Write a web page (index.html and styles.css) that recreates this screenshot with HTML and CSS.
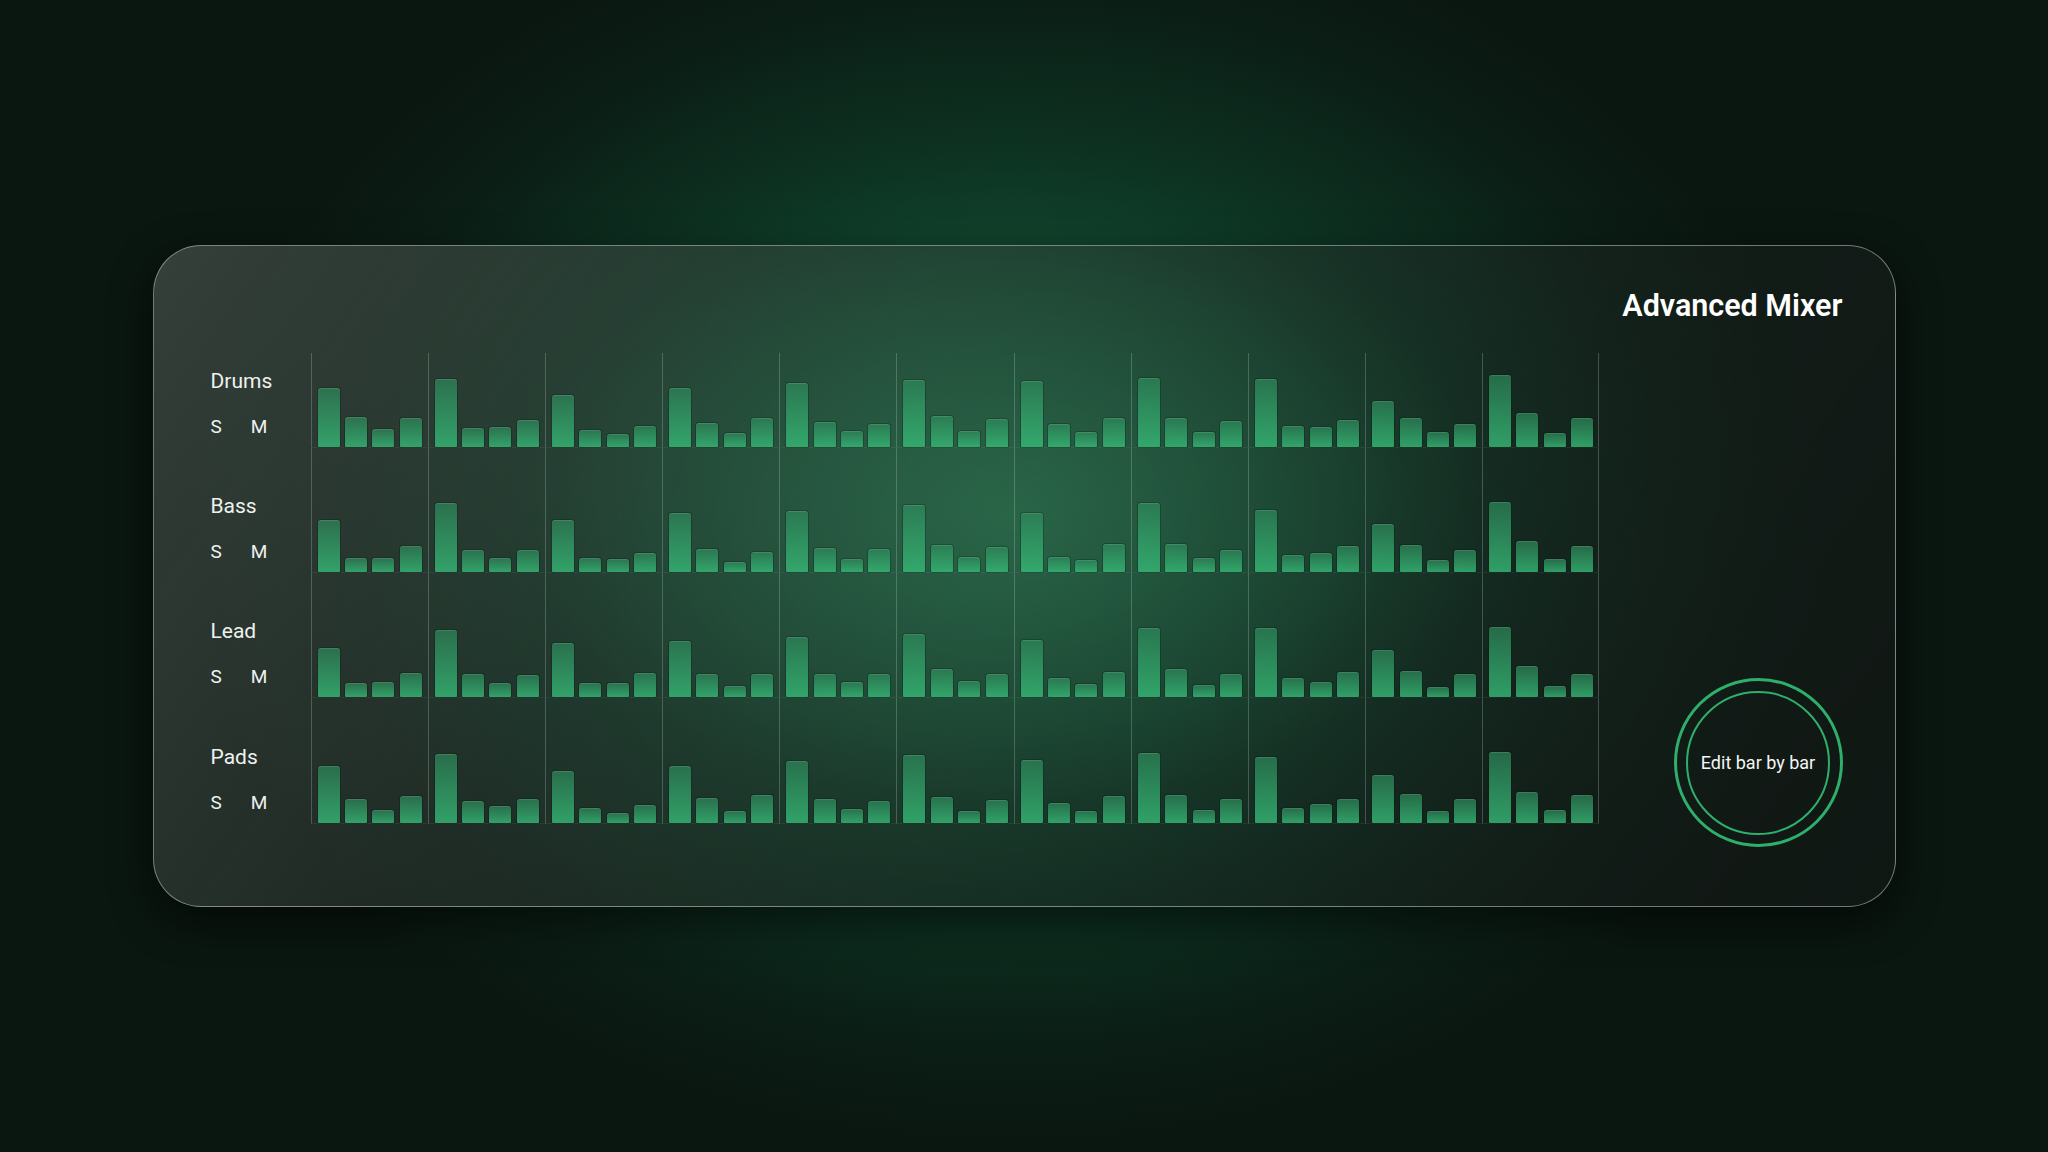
FILE: index.html
```html
<!DOCTYPE html>
<html lang="en">
<head>
<meta charset="utf-8">
<title>Advanced Mixer</title>
<link rel="stylesheet" href="styles.css">
</head>
<body>
<main class="panel">
  <header class="panel-head">
    <h1 class="title">Advanced Mixer</h1>
  </header>
  <section class="panel-body">
    <div class="mixer">
      <div class="track-label first"><span class="track-name">Drums</span><span class="sm"><span>S</span><span>M</span></span></div>
      <div class="cell first"><i class="bar" style="height:59px"></i><i class="bar" style="height:30px"></i><i class="bar" style="height:18px"></i><i class="bar" style="height:29px"></i></div>
      <div class="cell first"><i class="bar" style="height:68px"></i><i class="bar" style="height:19px"></i><i class="bar" style="height:20px"></i><i class="bar" style="height:27px"></i></div>
      <div class="cell first"><i class="bar" style="height:52px"></i><i class="bar" style="height:17px"></i><i class="bar" style="height:13px"></i><i class="bar" style="height:21px"></i></div>
      <div class="cell first"><i class="bar" style="height:59px"></i><i class="bar" style="height:24px"></i><i class="bar" style="height:14px"></i><i class="bar" style="height:29px"></i></div>
      <div class="cell first"><i class="bar" style="height:64px"></i><i class="bar" style="height:25px"></i><i class="bar" style="height:16px"></i><i class="bar" style="height:23px"></i></div>
      <div class="cell first"><i class="bar" style="height:67px"></i><i class="bar" style="height:31px"></i><i class="bar" style="height:16px"></i><i class="bar" style="height:28px"></i></div>
      <div class="cell first"><i class="bar" style="height:66px"></i><i class="bar" style="height:23px"></i><i class="bar" style="height:15px"></i><i class="bar" style="height:29px"></i></div>
      <div class="cell first"><i class="bar" style="height:69px"></i><i class="bar" style="height:29px"></i><i class="bar" style="height:15px"></i><i class="bar" style="height:26px"></i></div>
      <div class="cell first"><i class="bar" style="height:68px"></i><i class="bar" style="height:21px"></i><i class="bar" style="height:20px"></i><i class="bar" style="height:27px"></i></div>
      <div class="cell first"><i class="bar" style="height:46px"></i><i class="bar" style="height:29px"></i><i class="bar" style="height:15px"></i><i class="bar" style="height:23px"></i></div>
      <div class="cell first last"><i class="bar" style="height:72px"></i><i class="bar" style="height:34px"></i><i class="bar" style="height:14px"></i><i class="bar" style="height:29px"></i></div>

      <div class="track-label"><span class="track-name">Bass</span><span class="sm"><span>S</span><span>M</span></span></div>
      <div class="cell"><i class="bar" style="height:52px"></i><i class="bar" style="height:14px"></i><i class="bar" style="height:14px"></i><i class="bar" style="height:26px"></i></div>
      <div class="cell"><i class="bar" style="height:69px"></i><i class="bar" style="height:22px"></i><i class="bar" style="height:14px"></i><i class="bar" style="height:22px"></i></div>
      <div class="cell"><i class="bar" style="height:52px"></i><i class="bar" style="height:14px"></i><i class="bar" style="height:13px"></i><i class="bar" style="height:19px"></i></div>
      <div class="cell"><i class="bar" style="height:59px"></i><i class="bar" style="height:23px"></i><i class="bar" style="height:10px"></i><i class="bar" style="height:20px"></i></div>
      <div class="cell"><i class="bar" style="height:61px"></i><i class="bar" style="height:24px"></i><i class="bar" style="height:13px"></i><i class="bar" style="height:23px"></i></div>
      <div class="cell"><i class="bar" style="height:67px"></i><i class="bar" style="height:27px"></i><i class="bar" style="height:15px"></i><i class="bar" style="height:25px"></i></div>
      <div class="cell"><i class="bar" style="height:59px"></i><i class="bar" style="height:15px"></i><i class="bar" style="height:12px"></i><i class="bar" style="height:28px"></i></div>
      <div class="cell"><i class="bar" style="height:69px"></i><i class="bar" style="height:28px"></i><i class="bar" style="height:14px"></i><i class="bar" style="height:22px"></i></div>
      <div class="cell"><i class="bar" style="height:62px"></i><i class="bar" style="height:17px"></i><i class="bar" style="height:19px"></i><i class="bar" style="height:26px"></i></div>
      <div class="cell"><i class="bar" style="height:48px"></i><i class="bar" style="height:27px"></i><i class="bar" style="height:12px"></i><i class="bar" style="height:22px"></i></div>
      <div class="cell last"><i class="bar" style="height:70px"></i><i class="bar" style="height:31px"></i><i class="bar" style="height:13px"></i><i class="bar" style="height:26px"></i></div>

      <div class="track-label"><span class="track-name">Lead</span><span class="sm"><span>S</span><span>M</span></span></div>
      <div class="cell"><i class="bar" style="height:49px"></i><i class="bar" style="height:14px"></i><i class="bar" style="height:15px"></i><i class="bar" style="height:24px"></i></div>
      <div class="cell"><i class="bar" style="height:67px"></i><i class="bar" style="height:23px"></i><i class="bar" style="height:14px"></i><i class="bar" style="height:22px"></i></div>
      <div class="cell"><i class="bar" style="height:54px"></i><i class="bar" style="height:14px"></i><i class="bar" style="height:14px"></i><i class="bar" style="height:24px"></i></div>
      <div class="cell"><i class="bar" style="height:56px"></i><i class="bar" style="height:23px"></i><i class="bar" style="height:11px"></i><i class="bar" style="height:23px"></i></div>
      <div class="cell"><i class="bar" style="height:60px"></i><i class="bar" style="height:23px"></i><i class="bar" style="height:15px"></i><i class="bar" style="height:23px"></i></div>
      <div class="cell"><i class="bar" style="height:63px"></i><i class="bar" style="height:28px"></i><i class="bar" style="height:16px"></i><i class="bar" style="height:23px"></i></div>
      <div class="cell"><i class="bar" style="height:57px"></i><i class="bar" style="height:19px"></i><i class="bar" style="height:13px"></i><i class="bar" style="height:25px"></i></div>
      <div class="cell"><i class="bar" style="height:69px"></i><i class="bar" style="height:28px"></i><i class="bar" style="height:12px"></i><i class="bar" style="height:23px"></i></div>
      <div class="cell"><i class="bar" style="height:69px"></i><i class="bar" style="height:19px"></i><i class="bar" style="height:15px"></i><i class="bar" style="height:25px"></i></div>
      <div class="cell"><i class="bar" style="height:47px"></i><i class="bar" style="height:26px"></i><i class="bar" style="height:10px"></i><i class="bar" style="height:23px"></i></div>
      <div class="cell last"><i class="bar" style="height:70px"></i><i class="bar" style="height:31px"></i><i class="bar" style="height:11px"></i><i class="bar" style="height:23px"></i></div>

      <div class="track-label"><span class="track-name">Pads</span><span class="sm"><span>S</span><span>M</span></span></div>
      <div class="cell"><i class="bar" style="height:57px"></i><i class="bar" style="height:24px"></i><i class="bar" style="height:13px"></i><i class="bar" style="height:27px"></i></div>
      <div class="cell"><i class="bar" style="height:69px"></i><i class="bar" style="height:22px"></i><i class="bar" style="height:17px"></i><i class="bar" style="height:24px"></i></div>
      <div class="cell"><i class="bar" style="height:52px"></i><i class="bar" style="height:15px"></i><i class="bar" style="height:10px"></i><i class="bar" style="height:18px"></i></div>
      <div class="cell"><i class="bar" style="height:57px"></i><i class="bar" style="height:25px"></i><i class="bar" style="height:12px"></i><i class="bar" style="height:28px"></i></div>
      <div class="cell"><i class="bar" style="height:62px"></i><i class="bar" style="height:24px"></i><i class="bar" style="height:14px"></i><i class="bar" style="height:22px"></i></div>
      <div class="cell"><i class="bar" style="height:68px"></i><i class="bar" style="height:26px"></i><i class="bar" style="height:12px"></i><i class="bar" style="height:23px"></i></div>
      <div class="cell"><i class="bar" style="height:63px"></i><i class="bar" style="height:20px"></i><i class="bar" style="height:12px"></i><i class="bar" style="height:27px"></i></div>
      <div class="cell"><i class="bar" style="height:70px"></i><i class="bar" style="height:28px"></i><i class="bar" style="height:13px"></i><i class="bar" style="height:24px"></i></div>
      <div class="cell"><i class="bar" style="height:66px"></i><i class="bar" style="height:15px"></i><i class="bar" style="height:19px"></i><i class="bar" style="height:24px"></i></div>
      <div class="cell"><i class="bar" style="height:48px"></i><i class="bar" style="height:29px"></i><i class="bar" style="height:12px"></i><i class="bar" style="height:24px"></i></div>
      <div class="cell last"><i class="bar" style="height:71px"></i><i class="bar" style="height:31px"></i><i class="bar" style="height:13px"></i><i class="bar" style="height:28px"></i></div>
    </div>
    <aside class="side">
      <button class="edit-btn" type="button"><span class="edit-inner">Edit bar by bar</span></button>
    </aside>
  </section>
</main>
</body>
</html>
```

FILE: styles.css
```css
* { box-sizing: border-box; }

html, body {
  margin: 0;
  padding: 0;
}

body {
  min-height: 100vh;
  display: flex;
  align-items: center;
  justify-content: center;
  font-family: Roboto, "Liberation Sans", Arial, sans-serif;
  color: #eef2ef;
  background:
    radial-gradient(ellipse 820px 640px at 1010px 520px, #1a6d45 0%, #125034 30%, #0d3222 58%, #0b1e15 82%, #0a1610 100%),
    #0a1610;
}

.panel {
  width: 1743px;
  height: 662px;
  border: 1px solid rgba(190, 205, 196, 0.55);
  border-radius: 48px;
  padding: 42px 52px 59px 57px;
  display: flex;
  flex-direction: column;
  background:
    radial-gradient(ellipse 640px 400px at 850px 260px, rgba(60, 140, 100, 0.28), rgba(60, 140, 100, 0) 75%),
    linear-gradient(125deg, rgba(88, 98, 92, 0.55) 0%, rgba(60, 68, 63, 0.42) 32%, rgba(34, 42, 38, 0.4) 62%, rgba(18, 24, 21, 0.78) 100%);
  box-shadow: 0 14px 40px rgba(0, 0, 0, 0.55);
}

.panel-head {
  display: flex;
  justify-content: flex-end;
  margin-bottom: 29px;
}

.title {
  margin: 0;
  font-size: 30.5px;
  line-height: 36px;
  font-weight: 600;
  color: #ffffff;
}

.panel-body {
  flex: 1;
  display: flex;
  align-items: stretch;
}

.mixer {
  align-self: flex-start;
  width: 1389px;
  display: grid;
  grid-template-columns: 100px repeat(11, 1fr);
  grid-template-rows: 95px repeat(3, 125.2px);
}

.track-label {
  display: flex;
  flex-direction: column;
  justify-content: flex-end;
  padding-bottom: 9px;
}

.track-name {
  font-size: 21px;
  line-height: 28px;
  color: #eef2ef;
}

.sm {
  display: flex;
  gap: 29px;
  margin-top: 20px;
  font-size: 19px;
  line-height: 24px;
  color: #eef2ef;
}

.cell {
  display: flex;
  align-items: flex-end;
  justify-content: center;
  gap: 5.4px;
  border-left: 1px solid rgba(190, 205, 196, 0.28);
  border-bottom: 1px solid rgba(190, 205, 196, 0.08);
}

.cell.last {
  border-right: 1px solid rgba(190, 205, 196, 0.28);
}

.bar {
  display: block;
  width: 22px;
  border-radius: 3px 3px 1px 1px;
  background: linear-gradient(to top, rgba(54, 185, 118, 0.82), rgba(46, 138, 92, 0.68));
  box-shadow: inset 0 1px 0 rgba(255, 255, 255, 0.12), 0 0 0 1px rgba(0, 20, 10, 0.25);
}

.side {
  flex: 1;
  display: flex;
  align-items: flex-end;
  justify-content: flex-end;
}

.edit-btn {
  width: 169px;
  height: 169px;
  border: 3px solid #2faf6c;
  border-radius: 50%;
  padding: 9.5px;
  background: transparent;
  display: flex;
  font-family: inherit;
  cursor: pointer;
}

.edit-inner {
  flex: 1;
  display: flex;
  align-items: center;
  justify-content: center;
  border: 2.5px solid #2faf6c;
  border-radius: 50%;
  font-size: 18px;
  color: #f3f6f4;
  white-space: nowrap;
}
```
